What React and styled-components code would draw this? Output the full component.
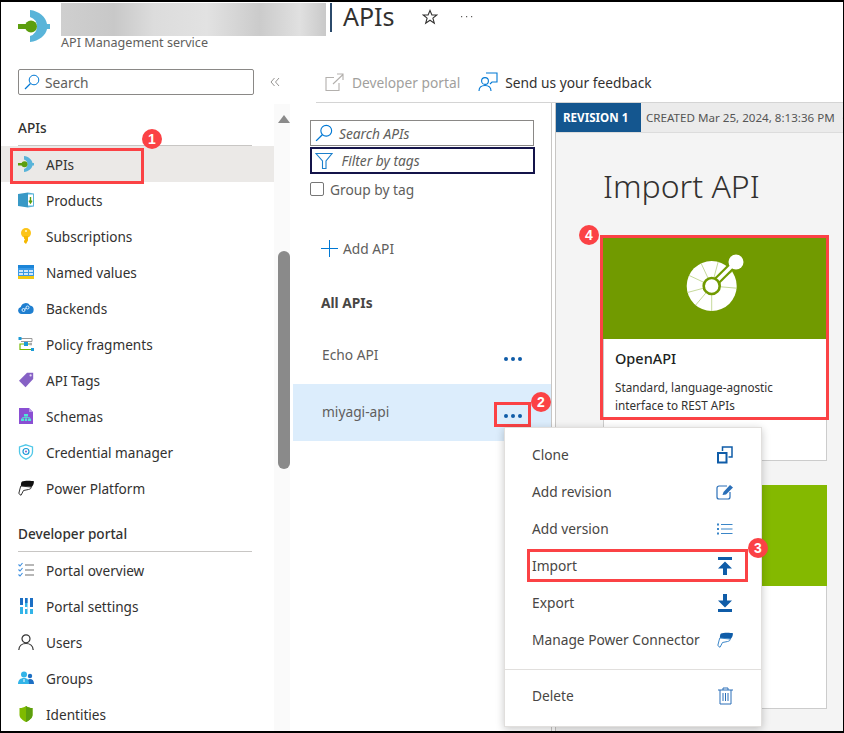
import styled, { createGlobalStyle } from "styled-components"

const GlobalStyle = createGlobalStyle`
  html, body { margin: 0; padding: 0; background: #fff; }
  * { box-sizing: border-box; }
`

const ApimIcon = ({ size = 32 }) => (
  <svg width={size} height={size} viewBox="0 0 32 32">
    <path d="M12 0C21 1 28 7 29 14H32V19H29C28 25 21 31 12 32L12 26A10 10 0 0 0 12 7Z" fill="#59b4d9" />
    <rect x="0" y="14" width="12" height="5" fill="#5c9e0e" />
    <circle cx="13" cy="16.5" r="6" fill="#5c9e0e" />
  </svg>
)
const ProductsIcon = () => (
  <svg width="16" height="16" viewBox="0 0 16 16">
    <path d="M0 2 10 0.5V15.5L0 14Z" fill="#3999c6" />
    <path d="M10 0.5 16 1.5V14.5L10 15.5Z" fill="#59b4d9" />
    <rect x="10" y="2.5" width="5" height="11" fill="#fff" />
    <path d="M12.5 5V10M11 8.6 12.5 11 14 8.6" stroke="#5c9e0e" strokeWidth="1.4" fill="none" />
  </svg>
)
const KeyIcon = () => (
  <svg width="16" height="16" viewBox="0 0 16 16">
    <circle cx="8" cy="5" r="5" fill="#fcc419" />
    <path d="M6 8H10V12.5L8 16 6 14.3V12.8L7 11.7 6 10.6Z" fill="#f5b800" />
    <circle cx="8" cy="3" r="1.1" fill="#fff3c4" />
  </svg>
)
const TableIcon = () => (
  <svg width="16" height="16" viewBox="0 0 16 16">
    <rect y="1" width="16" height="14" fill="#3999e6" />
    <rect y="1" width="16" height="3" fill="#1c85d8" />
    <path d="M1 6H5V8H1ZM6 6H10V8H6ZM11 6H15V8H11ZM1 9H5V11H1ZM6 9H10V11H6ZM11 9H15V11H11Z" fill="#cfe7fb" />
    <rect y="12" width="16" height="3" fill="#f2c811" />
  </svg>
)
const CloudIcon = () => (
  <svg width="16" height="16" viewBox="0 0 16 16">
    <path d="M3.5 14A3.5 3.5 0 0 1 2.8 7.1 5 5 0 0 1 12 5.5 4.3 4.3 0 0 1 12 14Z" fill="#1f7fd0" />
    <circle cx="5.5" cy="10" r="1.5" fill="none" stroke="#dcefff" />
    <circle cx="9.5" cy="7.5" r="1.5" fill="none" stroke="#dcefff" />
    <path d="M6.5 9.3 8.5 8.2" stroke="#dcefff" />
  </svg>
)
const PolicyIcon = () => (
  <svg width="16" height="16" viewBox="0 0 16 16">
    <path d="M3 2.5H14V5.5H3" fill="none" stroke="#9a9a9a" />
    <path d="M14 8H2V13.5H13" fill="none" stroke="#76b900" strokeWidth="1.2" />
    <rect x="0.5" y="1" width="3" height="3" fill="#1b9bd7" />
    <rect x="6" y="6" width="4" height="4" fill="#1b9bd7" />
    <rect x="13" y="12" width="3" height="3" fill="#1b9bd7" />
    <rect x="11.5" y="6.8" width="2.5" height="2.5" fill="#aaa" />
  </svg>
)
const TagIcon = () => (
  <svg width="16" height="16" viewBox="0 0 16 16">
    <path d="M9 0.8H15.2V7L7.5 15.2 1 8.8Z" fill="#8661c5" />
    <circle cx="12.6" cy="3.4" r="1.1" fill="#e4d9f5" />
  </svg>
)
const SchemaIcon = () => (
  <svg width="16" height="16" viewBox="0 0 16 16">
    <path d="M1 0H11L15 4V16H1Z" fill="#8a4fd3" />
    <path d="M11 0 15 4H11Z" fill="#b795e8" />
    <path d="M6 6H10V8.5H6ZM3 10.5H6V13H3ZM6.8 10.5H9.2V13H6.8ZM10 10.5H13V13H10Z" fill="#50e6d6" />
    <path d="M8 8.5V10.5M4.5 10.5V9.5H11.5V10.5" stroke="#50e6d6" fill="none" strokeWidth="0.8" />
  </svg>
)
const CredentialIcon = () => (
  <svg width="16" height="16" viewBox="0 0 16 16">
    <path d="M8 0.8 14.5 3V8C14.5 11.5 11 14 8 15.2 5 14 1.5 11.5 1.5 8V3Z" fill="#fff" stroke="#50c8e8" strokeWidth="1.3" />
    <circle cx="8" cy="7.5" r="3" fill="none" stroke="#1b9bd7" strokeWidth="1.2" />
    <circle cx="8" cy="7.5" r="1" fill="#8661c5" />
  </svg>
)
const PowerIcon = ({ top = "#111", bottom = "#fff", line = "#333" }) => (
  <svg width="16" height="16" viewBox="0 0 16 16">
    <path d="M4 1.5C6 0.5 13 0.5 16 1.2 15.8 4 15 6 13.5 7L3 6C2.8 4 3 2.5 4 1.5Z" fill={top} />
    <path d="M2.8 6 13 7C14 8 12 9.3 10.5 9.5L5.5 10.5 3 15.3 0.8 13.5 2.2 8Z" fill={bottom} stroke={line} strokeWidth="1" />
  </svg>
)
const ChecklistIcon = () => (
  <svg width="16" height="16" viewBox="0 0 16 16">
    <path d="M0.5 2.5 2 4 4.5 1M0.5 7.5 2 9 4.5 6M0.5 12.5 2 14 4.5 11" fill="none" stroke="#3b8ee0" strokeWidth="1.1" />
    <path d="M7 3H16M7 8H16M7 13H16" stroke="#a0a0a0" strokeWidth="1.4" />
  </svg>
)
const SettingsBarsIcon = () => (
  <svg width="16" height="16" viewBox="0 0 16 16">
    <path d="M2 0H5V16H2ZM7 0H9.5V16H7ZM12 0H15V16H12Z" fill="#32b4e8" />
    <path d="M2 0H5V7H2ZM7 0H9.5V5H7ZM12 0H15V9H12Z" fill="#1c6fc4" />
    <path d="M2 7H5V9H2ZM7 9H9.5V11H7ZM12 9H15V11H12Z" fill="#fff" />
  </svg>
)
const UserIcon = () => (
  <svg width="16" height="16" viewBox="0 0 16 16">
    <circle cx="8" cy="4.8" r="4" fill="none" stroke="#333" strokeWidth="1.2" />
    <path d="M0.8 16C1 12 4 9.5 8 9.5 12 9.5 15 12 15.2 16" fill="none" stroke="#333" strokeWidth="1.2" />
  </svg>
)
const GroupIcon = () => (
  <svg width="16" height="16" viewBox="0 0 16 16">
    <circle cx="12" cy="6" r="2.2" fill="#1c6fc4" />
    <path d="M9 14C9 10.5 10 9 12 9 14.5 9 16 10.5 16 14Z" fill="#1c6fc4" />
    <circle cx="6" cy="4.5" r="3" fill="#32b4e8" />
    <path d="M0 14C0 10 2.5 8 6 8 9.5 8 11 10 11 14Z" fill="#32b4e8" />
    <path d="M6 9V12" stroke="#fff" />
  </svg>
)
const ShieldIcon = () => (
  <svg width="16" height="16" viewBox="0 0 16 16">
    <path d="M8 0C10 1.5 12 2 14.5 2V9C14.5 12 11 14.5 8 16 5 14.5 1.5 12 1.5 9V2C4 2 6 1.5 8 0Z" fill="#7fba00" />
    <path d="M8 0C10 1.5 12 2 14.5 2V9C14.5 12 11 14.5 8 16Z" fill="#5c9e0e" />
  </svg>
)
const SearchGlass = ({ size = 16, color = "#0078d4" }) => (
  <svg width={size} height={size} viewBox="0 0 16 16">
    <circle cx="10" cy="6" r="4.8" fill="none" stroke={color} strokeWidth="1" />
    <path d="M6.5 9.5 1 15" stroke={color} strokeWidth="1.2" />
  </svg>
)
const FilterGlyph = () => (
  <svg width="18" height="18" viewBox="0 0 18 18">
    <path d="M1 1.5H17L11 9V16.5H7.5V9Z" fill="none" stroke="#1b7fcc" strokeWidth="1.1" />
  </svg>
)
const ExternalIcon = () => (
  <svg width="19" height="19" viewBox="0 0 19 19">
    <path d="M9 4.5H1V17.5H14V10M8 11 18 1.5M12 1H18V7" fill="none" stroke="#b3b0ad" strokeWidth="1.1" />
  </svg>
)
const FeedbackIcon = () => (
  <svg width="20" height="20" viewBox="0 0 20 20">
    <path d="M8 1H19V10H14L12 12" fill="none" stroke="#0078d4" strokeWidth="1.1" />
    <circle cx="7" cy="9" r="3.4" fill="none" stroke="#0078d4" strokeWidth="1.1" />
    <path d="M1 19C1 15.5 3.5 13.5 7 13.5 10.5 13.5 13 15.5 13 19" fill="none" stroke="#0078d4" strokeWidth="1.1" />
  </svg>
)
const StarIcon = () => (
  <svg width="16" height="16" viewBox="0 0 16 16">
    <path d="M8 1.5 9.9 6H14.8L10.9 9.1 12.3 14.2 8 11.2 3.7 14.2 5.1 9.1 1.2 6H6.1Z" fill="none" stroke="#323130" strokeWidth="1.1" />
  </svg>
)
const MoreIcon = () => (
  <svg width="12" height="4" viewBox="0 0 12 4">
    <path d="M0 1H1.2V2.2H0ZM5 1H6.2V2.2H5ZM10 1H11.2V2.2H10Z" fill="#605e5c" />
  </svg>
)
const CollapseIcon = () => (
  <svg width="10" height="10" viewBox="0 0 10 10">
    <path d="M4.5 1 1 5 4.5 9M9 1 5.5 5 9 9" fill="none" stroke="#8a8886" strokeWidth="0.9" />
  </svg>
)
const ScrollArrow = () => (
  <svg width="12" height="8" viewBox="0 0 12 8">
    <path d="M6 0 12 8H0Z" fill="#8a8a8a" />
  </svg>
)
const PlusIcon = () => (
  <svg width="17" height="17" viewBox="0 0 17 17">
    <path d="M8.5 0V17M0 8.5H17" stroke="#0078d4" strokeWidth="1" />
  </svg>
)
const TabChevron = () => (
  <svg width="8" height="6" viewBox="0 0 8 6">
    <path d="M0.5 1 4 5 7.5 1" fill="none" stroke="#777" />
  </svg>
)
const CloneIcon = () => (
  <svg width="16" height="18" viewBox="0 0 16 18">
    <rect x="1" y="7" width="8.5" height="9.5" fill="none" stroke="#0f5ca8" strokeWidth="2" />
    <path d="M5.5 5V1H15V11H11.5" fill="none" stroke="#0f5ca8" strokeWidth="1.5" />
  </svg>
)
const EditIcon = () => (
  <svg width="18" height="16" viewBox="0 0 18 16">
    <path d="M11 2H3A2 2 0 0 0 1 4V13A2 2 0 0 0 3 15H12A2 2 0 0 0 14 13V8" fill="none" stroke="#2a6fb8" strokeWidth="1.2" />
    <path d="M6.5 11 7.5 8 14 1 17 3.5 10 10.5Z" fill="#2a6fb8" />
  </svg>
)
const ListIcon = () => (
  <svg width="16" height="12" viewBox="0 0 16 12">
    <path d="M4 1.5H15.5M4 6H15.5M4 10.5H15.5" stroke="#3b86c8" strokeWidth="1.1" />
    <path d="M0 0.5H2V2.5H0ZM0 5H2V7H0ZM0 9.5H2V11.5H0Z" fill="#3b86c8" />
  </svg>
)
const ImportIcon = () => (
  <svg width="16" height="18" viewBox="0 0 16 18">
    <path d="M1 0H15V3H1Z" fill="#0f5ca8" />
    <path d="M8 4.5 15 11.5H10V18H6V11.5H1Z" fill="#0f5ca8" />
  </svg>
)
const ExportIcon = () => (
  <svg width="16" height="18" viewBox="0 0 16 18">
    <path d="M1 15H15V18H1Z" fill="#0f5ca8" />
    <path d="M6 0H10V6.5H15L8 13.5 1 6.5H6Z" fill="#0f5ca8" />
  </svg>
)
const TrashIcon = () => (
  <svg width="15" height="18" viewBox="0 0 15 18">
    <path d="M0 3H15M5 3V1H10V3" fill="none" stroke="#2a6fb8" />
    <path d="M2 3V17H13V3M5 6V14M7.5 6V14M10 6V14" fill="none" stroke="#2a6fb8" />
  </svg>
)
const OpenApiIcon = () => {
  const spokes = [5, 90, 130, 165, 205, 245, 285, 325]
  return (
    <svg width="58" height="58" viewBox="0 0 58 58">
      <circle cx="25.7" cy="32" r="25" fill="#fff" />
      {spokes.map((a) => (
        <line
          key={a}
          x1="25.7"
          y1="32"
          x2={25.7 + 25 * Math.cos((a * Math.PI) / 180)}
          y2={32 + 25 * Math.sin((a * Math.PI) / 180)}
          stroke="#c6d99a"
          strokeWidth="1"
        />
      ))}
      <path d="M25.7 32 50 8" stroke="#719a00" strokeWidth="8" />
      <path d="M25.7 32 50 8" stroke="#fff" strokeWidth="3.6" />
      <circle cx="50" cy="8" r="7.5" fill="#fff" />
      <circle cx="25.7" cy="32" r="8" fill="#fff" stroke="#719a00" strokeWidth="2.6" />
    </svg>
  )
}

const font = `"Noto Sans", "Open Sans", sans-serif`

const Page = styled.div`
  position: relative;
  width: 844px;
  height: 733px;
  overflow: hidden;
  display: flex;
  flex-direction: column;
  background: #fff;
  border: 1px solid #000;
  border-top-width: 2px;
  border-bottom-width: 2px;
  font-family: ${font};
  font-size: 13.75px;
  color: #323130;
`
const Header = styled.header`
  height: 60px;
  flex: none;
  display: flex;
  padding-left: 17px;
`
const LogoSlot = styled.div`
  width: 43px;
  padding-top: 8px;
`
const TitleBlock = styled.div`
  display: flex;
  flex-direction: column;
`
const TitleRow = styled.div`
  display: flex;
  align-items: flex-start;
  height: 34px;
`
const BlurredName = styled.div`
  width: 265px;
  height: 33px;
  margin-top: 1px;
  background: linear-gradient(90deg, #cfcfcf 0%, #c8c8c8 20%, #dcdcdc 35%, #e2e2e2 55%, #cbcbcb 75%, #e0e0e0 90%, #c9c9c9 100%);
  filter: blur(0.4px);
`
const TitleBar = styled.div`
  width: 2px;
  height: 29px;
  margin: 1px 11px 0 4px;
  background: #2b4a6b;
`
const Title = styled.h1`
  margin: 0;
  font-size: 25px;
  font-weight: 400;
  line-height: 29px;
`
const TitleActions = styled.div`
  display: flex;
  align-items: center;
  height: 29px;
  margin-left: 27px;
  gap: 23px;
`
const Subtitle = styled.div`
  font-size: 12.6px;
  line-height: 16px;
  margin-top: -1px;
  color: #605e5c;
`
const Body = styled.div`
  flex: 1;
  display: flex;
  min-height: 0;
`
const LeftColumn = styled.div`
  width: 289px;
  flex: none;
  display: flex;
  flex-direction: column;
`
const SearchRow = styled.div`
  height: 42px;
  flex: none;
  padding: 7px 0 0 17px;
  display: flex;
`
const SideSearch = styled.div`
  width: 236px;
  height: 26px;
  border: 1px solid #8a8886;
  border-radius: 2px;
  display: flex;
  align-items: center;
  gap: 5px;
  padding-left: 5px;
  color: #605e5c;
`
const CollapseSlot = styled.div`
  margin: 8px 0 0 16px;
  display: flex;
`
const NavArea = styled.div`
  flex: 1;
  display: flex;
  min-height: 0;
`
const Nav = styled.nav`
  width: 273px;
  flex: none;
  overflow: hidden;
  font-size: 13.6px;
`
const SectionTitle = styled.div`
  height: ${({ $height }) => $height}px;
  margin: 0 22px 0 17px;
  padding-bottom: 8px;
  display: flex;
  align-items: flex-end;
  font-weight: 500;
  line-height: 19px;
  border-bottom: 1px solid #c8c6c4;
`
const NavRow = styled.div`
  height: 36px;
  padding-left: 17px;
  display: flex;
  align-items: center;
  gap: 12px;
  background: ${({ $active }) => ($active ? "#ebe9e7" : "transparent")};
`
const NavIconSlot = styled.span`
  width: 16px;
  height: 16px;
  display: flex;
`
const ScrollTrack = styled.div`
  width: 16px;
  flex: none;
  background: #fafafa;
  display: flex;
  flex-direction: column;
  align-items: flex-end;
  padding-top: 11px;
`
const ScrollThumb = styled.div`
  width: 12px;
  height: 218px;
  margin-top: 128px;
  border-radius: 6px;
  background: #8a8a8a;
`
const RightColumn = styled.div`
  flex: 1;
  min-width: 0;
  display: flex;
  flex-direction: column;
`
const Toolbar = styled.div`
  height: 41px;
  flex: none;
  margin-left: 26px;
  padding-left: 9px;
  display: flex;
  align-items: center;
  border-bottom: 1px solid #d4d4d4;
`
const ToolbarItem = styled.div`
  display: flex;
  align-items: center;
  gap: ${({ $gap }) => $gap}px;
  margin-right: 18px;
  color: ${({ $disabled }) => ($disabled ? "#a19f9d" : "#323130")};
`
const Panels = styled.div`
  flex: 1;
  display: flex;
  min-height: 0;
`
const ListPanel = styled.div`
  width: 259px;
  flex: none;
  margin-left: 3px;
  border-right: 1px solid #c8c6c4;
`
const FilterStack = styled.div`
  padding: 17px 0 0 17px;
`
const FilterInput = styled.div`
  width: ${({ $focus }) => ($focus ? 225 : 224)}px;
  height: ${({ $focus }) => ($focus ? 27 : 26)}px;
  margin-bottom: 1px;
  border: ${({ $focus }) => ($focus ? "2px solid #14144a" : "1px solid #8a8886")};
  display: flex;
  align-items: center;
  gap: ${({ $focus }) => ($focus ? 5 : 6)}px;
  padding-left: ${({ $focus }) => ($focus ? 3 : 4)}px;
  font-style: italic;
  color: #605e5c;
`
const CheckRow = styled.label`
  display: flex;
  align-items: center;
  gap: 6px;
  height: 14px;
  margin-top: 8px;
  color: #605e5c;
`
const CheckBox = styled.span`
  width: 14px;
  height: 14px;
  border: 1px solid #767676;
  border-radius: 2px;
  background: #fff;
`
const AddRow = styled.div`
  height: 30px;
  margin: 37px 0 0 28px;
  display: flex;
  align-items: center;
  gap: 5px;
  color: #605e5c;
`
const ListHeading = styled.div`
  margin: 30px 0 14px 28px;
  line-height: 20px;
  font-weight: 700;
  color: #484644;
`
const ApiRow = styled.div`
  height: 57px;
  padding: 0 29px 2px 29px;
  display: flex;
  align-items: center;
  justify-content: space-between;
  color: #605e5c;
  background: ${({ $selected }) => ($selected ? "#dcedfc" : "transparent")};
`
const RowDots = styled.div`
  display: flex;
  gap: 3px;
  margin-top: 8px;
`
const Dot = styled.i`
  width: 4px;
  height: 4px;
  border-radius: 50%;
  background: #0f5ca8;
`
const DetailPane = styled.div`
  flex: 1;
  min-width: 0;
  margin-left: 3px;
  border-left: 1px solid #c8c6c4;
  background: #f4f4f4;
  overflow: hidden;
`
const TabBar = styled.div`
  height: 30px;
  display: flex;
  align-items: center;
  background: #ebebeb;
  border-bottom: 1px solid #dcdcdc;
  font-size: 11.6px;
`
const RevisionTab = styled.div`
  width: 85px;
  height: 29px;
  flex: none;
  display: flex;
  align-items: center;
  padding-left: 7px;
  background: #14568f;
  color: #fff;
  font-weight: 700;
`
const CreatedText = styled.div`
  margin: 0 7px 0 5px;
  color: #555;
  white-space: nowrap;
`
const DetailBody = styled.div`
  padding-left: 47px;
`
const DetailTitle = styled.h2`
  margin: 31px 0 30px;
  font-size: 32px;
  font-weight: 300;
  line-height: 44px;
  color: #323130;
`
const ImportCard = styled.div`
  width: 224px;
  height: ${({ $height }) => $height}px;
  margin-bottom: 24px;
  background: #fff;
  border: 1px solid #ccc;
  border-top: none;
`
const CardHero = styled.div`
  height: 101px;
  margin: 0 -1px;
  padding-bottom: 11px;
  display: flex;
  align-items: center;
  justify-content: center;
  background: ${({ $color }) => $color};
`
const CardName = styled.div`
  margin: 10px 0 10px 11px;
  font-weight: 500;
  font-size: 14.5px;
  line-height: 19px;
  color: #201f1e;
`
const CardText = styled.div`
  margin: 0 8px 0 11px;
  font-size: 11.7px;
  line-height: 18px;
  color: #323130;
`
const Highlight = styled.div`
  position: absolute;
  left: ${({ $x }) => $x}px;
  top: ${({ $y }) => $y}px;
  width: ${({ $w }) => $w}px;
  height: ${({ $h }) => $h}px;
  border: 3px solid #fb4245;
  pointer-events: none;
`
const Badge = styled.div`
  position: absolute;
  left: ${({ $x }) => $x - 10}px;
  top: ${({ $y }) => $y - 10}px;
  width: 20px;
  height: 20px;
  border-radius: 50%;
  background: #fb4245;
  color: #fff;
  font-family: "Liberation Sans", sans-serif;
  font-size: 14px;
  font-weight: 700;
  line-height: 20px;
  text-align: center;
`
const Menu = styled.div`
  position: absolute;
  left: 503px;
  top: 425px;
  width: 258px;
  height: 300px;
  padding-top: 8px;
  background: #fff;
  border: 1px solid #e1dfdd;
  box-shadow: 0 2px 8px rgba(0, 0, 0, 0.22);
`
const MenuRow = styled.div`
  height: 37px;
  padding: 0 27px;
  display: flex;
  align-items: center;
  justify-content: space-between;
  color: #484644;
`
const MenuIconSlot = styled.span`
  width: 18px;
  display: flex;
  justify-content: center;
`
const MenuDivider = styled.div`
  height: 1px;
  margin: 11px 0 7px;
  background: #e1dfdd;
`

const sections = [
  {
    title: "APIs",
    height: 42,
    items: [
      { label: "APIs", icon: <ApimIcon size={16} />, active: true },
      { label: "Products", icon: <ProductsIcon /> },
      { label: "Subscriptions", icon: <KeyIcon /> },
      { label: "Named values", icon: <TableIcon /> },
      { label: "Backends", icon: <CloudIcon /> },
      { label: "Policy fragments", icon: <PolicyIcon /> },
      { label: "API Tags", icon: <TagIcon /> },
      { label: "Schemas", icon: <SchemaIcon /> },
      { label: "Credential manager", icon: <CredentialIcon /> },
      { label: "Power Platform", icon: <PowerIcon /> },
    ],
  },
  {
    title: "Developer portal",
    height: 46,
    items: [
      { label: "Portal overview", icon: <ChecklistIcon /> },
      { label: "Portal settings", icon: <SettingsBarsIcon /> },
      { label: "Users", icon: <UserIcon /> },
      { label: "Groups", icon: <GroupIcon /> },
      { label: "Identities", icon: <ShieldIcon /> },
    ],
  },
]

const menuItems = [
  { label: "Clone", icon: <CloneIcon /> },
  { label: "Add revision", icon: <EditIcon /> },
  { label: "Add version", icon: <ListIcon /> },
  { label: "Import", icon: <ImportIcon /> },
  { label: "Export", icon: <ExportIcon /> },
  { label: "Manage Power Connector", icon: <PowerIcon top="#0f5ca8" line="#3b86c8" /> },
]

const App = () => {
  return (
    <>
      <GlobalStyle />
      <Page>
        <Header>
          <LogoSlot>
            <ApimIcon />
          </LogoSlot>
          <TitleBlock>
            <TitleRow>
              <BlurredName />
              <TitleBar />
              <Title>APIs</Title>
              <TitleActions>
                <StarIcon />
                <MoreIcon />
              </TitleActions>
            </TitleRow>
            <Subtitle>API Management service</Subtitle>
          </TitleBlock>
        </Header>
        <Body>
          <LeftColumn>
            <SearchRow>
              <SideSearch>
                <SearchGlass />
                Search
              </SideSearch>
              <CollapseSlot>
                <CollapseIcon />
              </CollapseSlot>
            </SearchRow>
            <NavArea>
              <Nav>
                {sections.map((section) => (
                  <div key={section.title}>
                    <SectionTitle $height={section.height}>{section.title}</SectionTitle>
                    {section.items.map((item) => (
                      <NavRow key={item.label} $active={item.active}>
                        <NavIconSlot>{item.icon}</NavIconSlot>
                        {item.label}
                      </NavRow>
                    ))}
                  </div>
                ))}
              </Nav>
              <ScrollTrack>
                <ScrollArrow />
                <ScrollThumb />
              </ScrollTrack>
            </NavArea>
          </LeftColumn>
          <RightColumn>
            <Toolbar>
              <ToolbarItem $disabled $gap={8}>
                <ExternalIcon />
                Developer portal
              </ToolbarItem>
              <ToolbarItem $gap={7}>
                <FeedbackIcon />
                Send us your feedback
              </ToolbarItem>
            </Toolbar>
            <Panels>
              <ListPanel>
                <FilterStack>
                  <FilterInput>
                    <SearchGlass size={18} />
                    Search APIs
                  </FilterInput>
                  <FilterInput $focus>
                    <FilterGlyph />
                    &nbsp;Filter by tags
                  </FilterInput>
                  <CheckRow>
                    <CheckBox />
                    Group by tag
                  </CheckRow>
                </FilterStack>
                <AddRow>
                  <PlusIcon />
                  Add API
                </AddRow>
                <ListHeading>All APIs</ListHeading>
                <ApiRow>
                  Echo API
                  <RowDots>
                    <Dot />
                    <Dot />
                    <Dot />
                  </RowDots>
                </ApiRow>
                <ApiRow $selected>
                  miyagi-api
                  <RowDots>
                    <Dot />
                    <Dot />
                    <Dot />
                  </RowDots>
                </ApiRow>
              </ListPanel>
              <DetailPane>
                <TabBar>
                  <RevisionTab>REVISION 1</RevisionTab>
                  <CreatedText>CREATED Mar 25, 2024, 8:13:36 PM</CreatedText>
                  <TabChevron />
                </TabBar>
                <DetailBody>
                  <DetailTitle>Import API</DetailTitle>
                  <ImportCard $height={223}>
                    <CardHero $color="#719a00">
                      <OpenApiIcon />
                    </CardHero>
                    <CardName>OpenAPI</CardName>
                    <CardText>Standard, language-agnostic interface to REST APIs</CardText>
                  </ImportCard>
                  <ImportCard $height={224}>
                    <CardHero $color="#84b900" />
                  </ImportCard>
                </DetailBody>
              </DetailPane>
            </Panels>
          </RightColumn>
        </Body>

        <Highlight $x={9} $y={146} $w={134} $h={36} />
        <Highlight $x={493} $y={400} $w={37} $h={25} />
        <Highlight $x={599} $y={233} $w={229} $h={185} />
        <Menu>
          {menuItems.map((item) => (
            <MenuRow key={item.label}>
              {item.label}
              <MenuIconSlot>{item.icon}</MenuIconSlot>
            </MenuRow>
          ))}
          <MenuDivider />
          <MenuRow>
            Delete
            <MenuIconSlot>
              <TrashIcon />
            </MenuIconSlot>
          </MenuRow>
        </Menu>
        <Highlight $x={526} $y={547} $w={221} $h={33} />
        <Badge $x={151} $y={137}>1</Badge>
        <Badge $x={540} $y={400}>2</Badge>
        <Badge $x={757} $y={546}>3</Badge>
        <Badge $x={588} $y={233}>4</Badge>
      </Page>
    </>
  )
}

export default App
